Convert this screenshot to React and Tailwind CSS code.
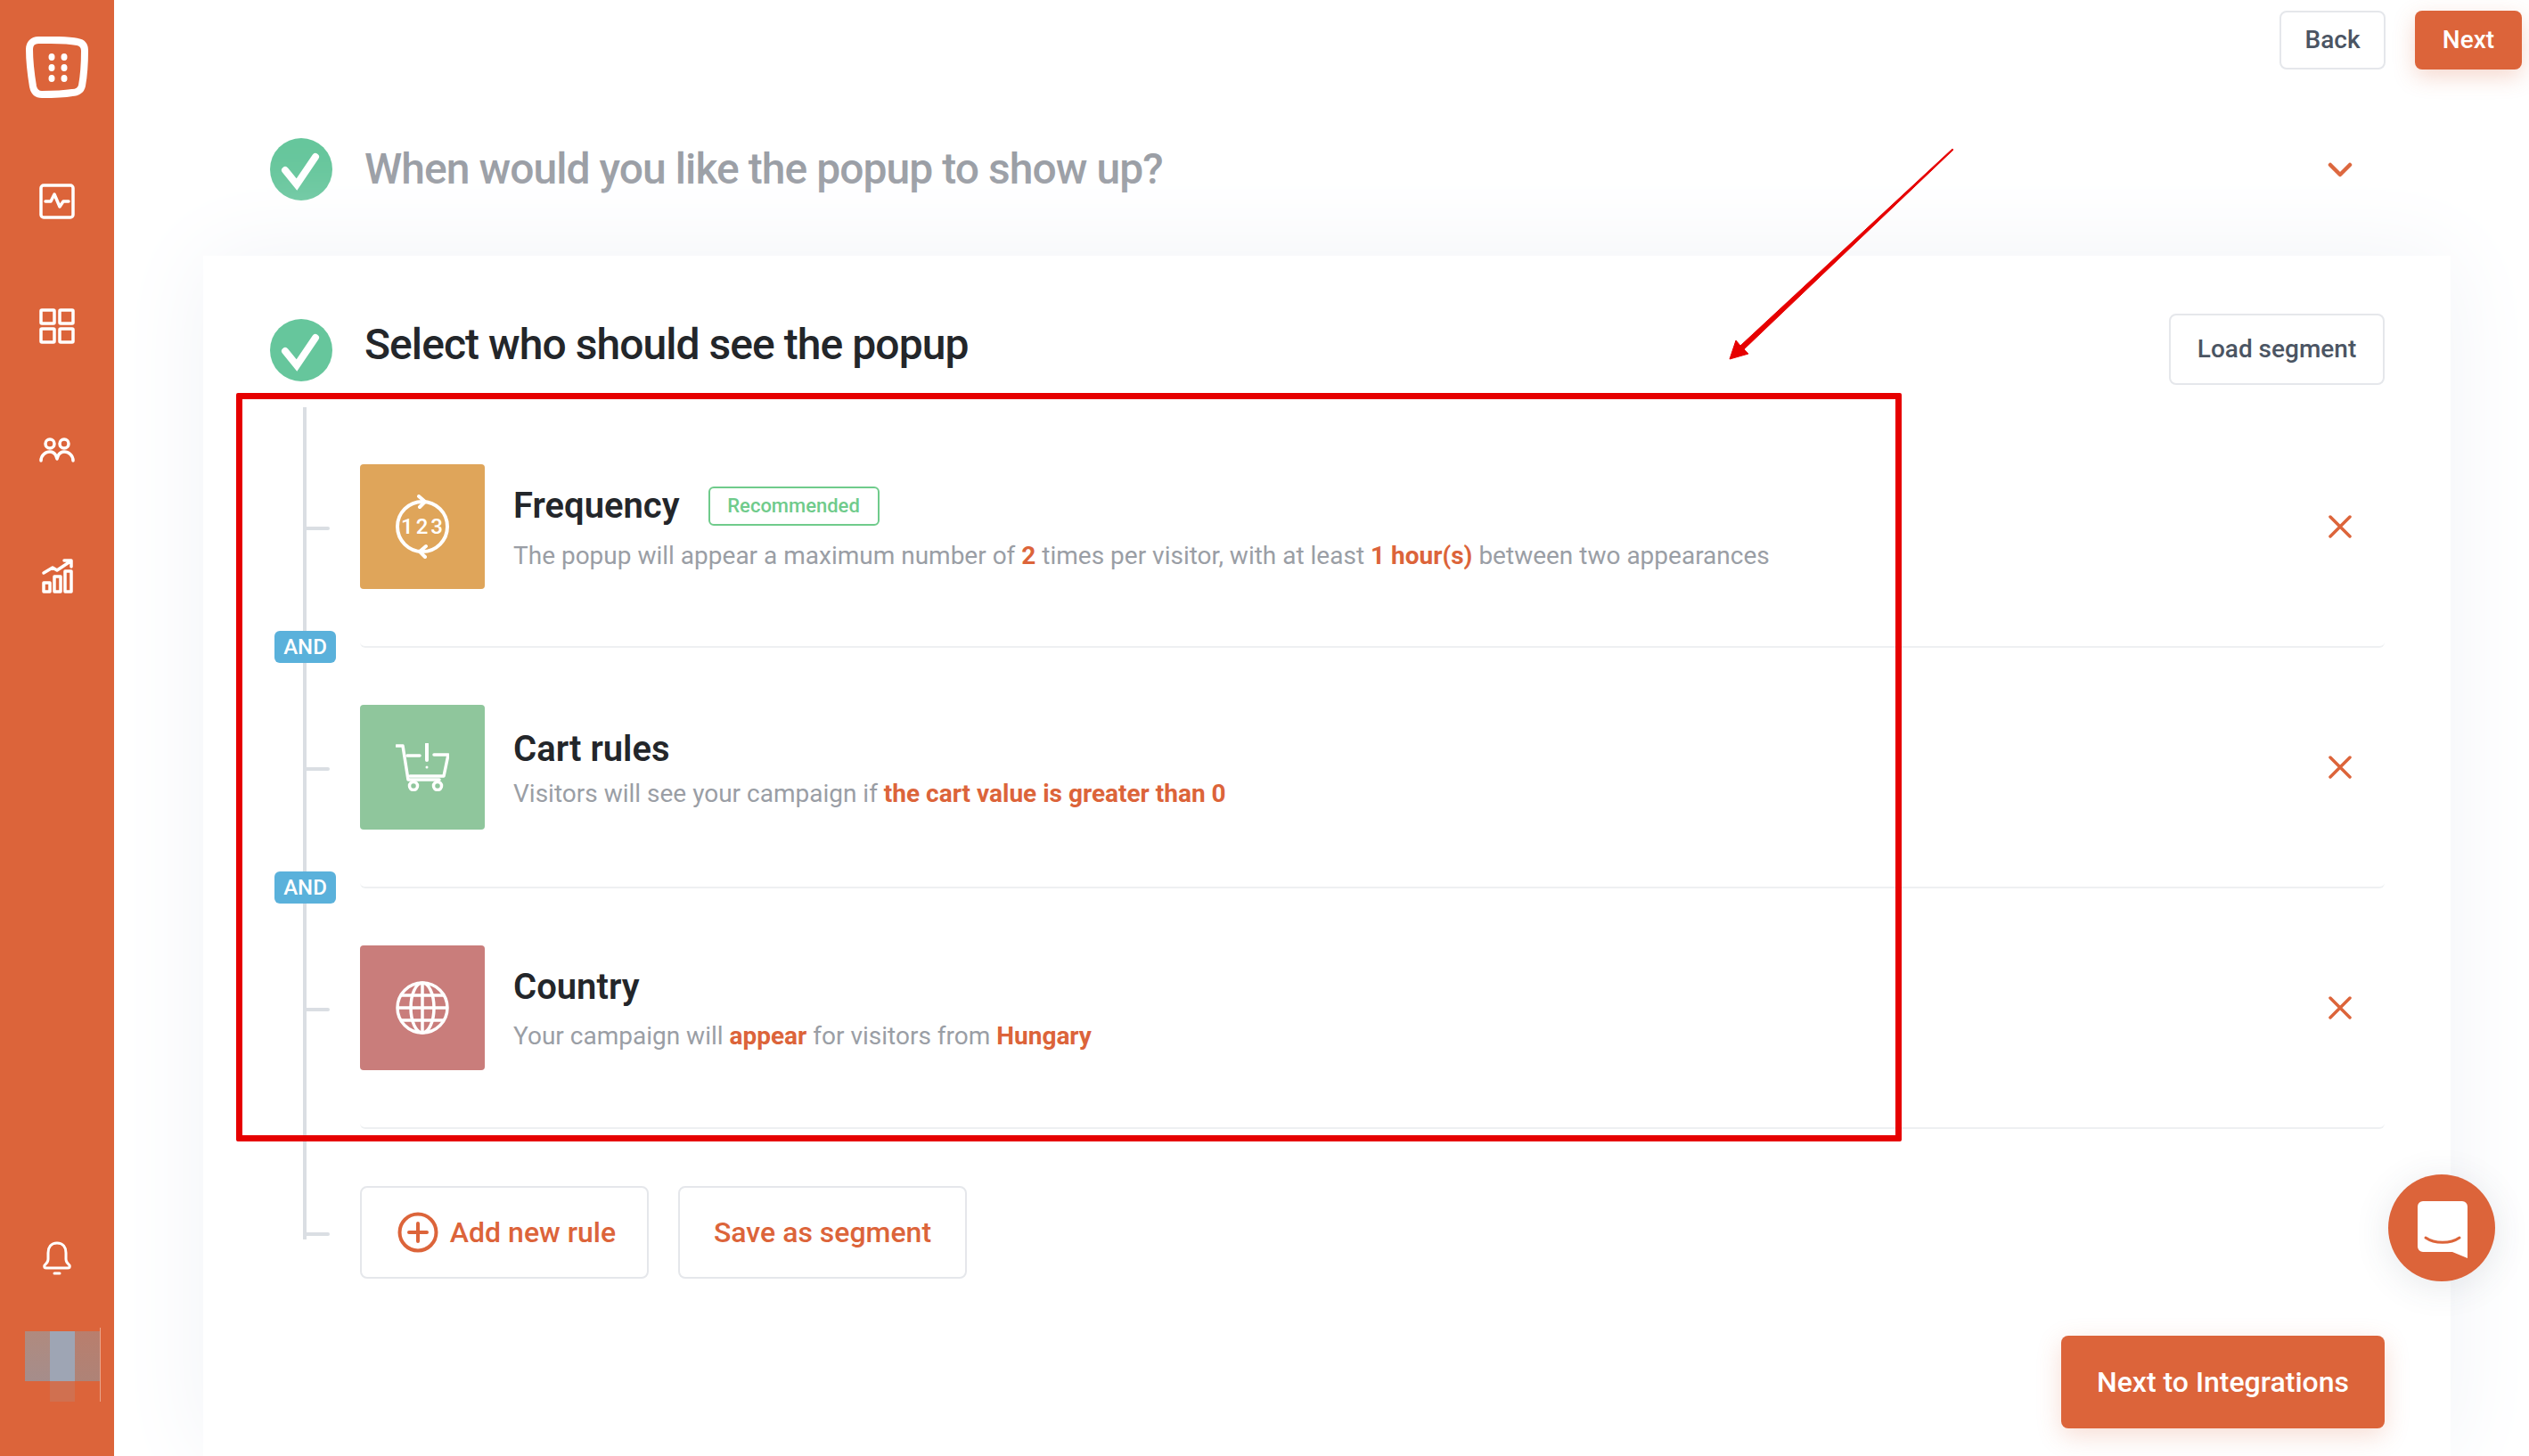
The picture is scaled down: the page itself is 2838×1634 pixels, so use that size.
import React from 'react'

const Check = () => (
    <div className="w-[70px] h-[70px] rounded-full bg-[#66c69c] shrink-0">
        <svg width="70" height="70" viewBox="0 0 70 70" fill="none">
            <path d="M17 36l13 16 21-31" stroke="#fff" strokeWidth="8" strokeLinecap="round" strokeLinejoin="miter" />
        </svg>
    </div>
)

const Close = () => (
    <svg width="26" height="26" viewBox="0 0 26 26" fill="none" className="mr-[37px] shrink-0">
        <path d="M2 2l22 22M24 2L2 24" stroke="#dc643a" strokeWidth="3.5" strokeLinecap="round" />
    </svg>
)

const FrequencyIcon = () => (
    <svg width="60" height="72" viewBox="0 0 60 72" fill="none" stroke="#fff" strokeWidth="4" strokeLinecap="round" strokeLinejoin="round">
        <circle cx="30" cy="36" r="28" />
        <path d="M26 2l7 6-6 6M34 58l-7 6 6 6" />
        <text x="31" y="44" textAnchor="middle" fill="#fff" stroke="none" fontSize="24" fontWeight="500" letterSpacing="3" fontFamily="Roboto, sans-serif">123</text>
    </svg>
)

const CartIcon = () => (
    <svg width="60" height="54" viewBox="0 0 60 54" fill="none" stroke="#fff" strokeWidth="3.5" strokeLinecap="round" strokeLinejoin="round">
        <path d="M1 3h7l6 38h35" />
        <path d="M13 14h14M43 13h16l-5 24H16" />
        <path d="M35 1v18" strokeWidth="4" />
        <circle cx="35" cy="27" r="1.5" fill="#fff" stroke="none" />
        <circle cx="20" cy="48" r="4.5" />
        <circle cx="47" cy="48" r="4.5" />
    </svg>
)

const GlobeIcon = () => (
    <svg width="60" height="60" viewBox="0 0 60 60" fill="none" stroke="#fff" strokeWidth="3.5">
        <circle cx="30" cy="30" r="28" />
        <ellipse cx="30" cy="30" rx="13" ry="28" />
        <path d="M30 2v56M2 30h56M6 16h48M6 44h48" />
    </svg>
)

const rules = [
    {
        color: 'bg-[#dfa55a]',
        icon: <FrequencyIcon />,
        title: 'Frequency',
        gap: 'mt-[12px]',
        desc: (
            <>
                The popup will appear a maximum number of <b className="font-bold text-[#dc643a]">2</b> times per visitor, with at least <b className="font-bold text-[#dc643a]">1 hour(s)</b> between two appearances
            </>
        ),
        badge: true,
    },
    {
        color: 'bg-[#8fc69c]',
        icon: <CartIcon />,
        title: 'Cart rules',
        gap: 'mt-[6px]',
        desc: (
            <>
                Visitors will see your campaign if <b className="font-bold text-[#dc643a]">the cart value is greater than 0</b>
            </>
        ),
    },
    {
        color: 'bg-[#c97d7b]',
        icon: <GlobeIcon />,
        title: 'Country',
        gap: 'mt-[11px]',
        desc: (
            <>
                Your campaign will <b className="font-bold text-[#dc643a]">appear</b> for visitors from <b className="font-bold text-[#dc643a]">Hungary</b>
            </>
        ),
    },
]

const RuleRow = ({ rule, last }) => (
    <div className="relative flex items-center h-[270px] border-b-2 border-[#eef0f2] rounded-b-md">
        <div className="absolute left-[-64px] top-[134px] w-[30px] h-[4px] bg-[#dadee3] rounded-sm"></div>
        {!last && (
            <div className="absolute left-[-96px] top-[251px] w-[69px] h-[36px] bg-[#5ab1db] rounded-md flex items-center justify-center text-white text-[24px] font-medium">
                AND
            </div>
        )}
        <div className={`${rule.color} w-[140px] h-[140px] rounded-[4px] flex items-center justify-center shrink-0`}>
            {rule.icon}
        </div>
        <div className="ml-[32px] flex-1 pt-[5px]">
            <div className="flex items-center">
                <h3 className="text-[40px] leading-[48px] font-semibold text-[#23262a]">{rule.title}</h3>
                {rule.badge && (
                    <span className="ml-[32px] h-[44px] w-[192px] flex items-center justify-center border-2 border-[#6fcb8b] rounded-md text-[22px] font-medium text-[#6fcb8b]">
                        Recommended
                    </span>
                )}
            </div>
            <p className={`${rule.gap} text-[28px] leading-[40px] text-[#9a9ea5]`}>{rule.desc}</p>
        </div>
        <Close />
    </div>
)

const SideIcon = ({ children, className }) => (
    <svg width="40" height="40" viewBox="0 0 40 40" fill="none" stroke="#fff" strokeWidth="3.5" strokeLinecap="round" strokeLinejoin="round" className={className}>
        {children}
    </svg>
)

const Sidebar = () => (
    <div className="w-[128px] h-full bg-[#dc643a] flex flex-col items-center shrink-0 relative">
        <svg width="70" height="70" viewBox="0 0 70 70" fill="none" className="mt-[41px]">
            <path d="M14 4 C28 4 44 3 58 6 C64 7 66 11 66 16 C66 30 65 44 63 55 C62 60 58 63 52 63 C40 65 28 65 18 65 C12 65 9 61 8 56 C6 44 4 30 4 14 C4 8 8 4 14 4 Z" stroke="#fff" strokeWidth="8" />
            <ellipse cx="29" cy="23" rx="3.5" ry="4" fill="#fff" />
            <ellipse cx="43" cy="23" rx="3.5" ry="4" fill="#fff" />
            <ellipse cx="29" cy="35" rx="3.5" ry="4" fill="#fff" />
            <ellipse cx="43" cy="35" rx="3.5" ry="4" fill="#fff" />
            <ellipse cx="29" cy="47" rx="3.5" ry="4" fill="#fff" />
            <ellipse cx="43" cy="47" rx="3.5" ry="4" fill="#fff" />
        </svg>
        <SideIcon className="mt-[95px]">
            <rect x="2" y="2" width="36" height="36" rx="3" />
            <path d="M7 20h6l4-8 6 14 4-6h6" />
        </SideIcon>
        <SideIcon className="mt-[100px]">
            <rect x="2" y="2" width="15" height="15" rx="1" />
            <rect x="23" y="2" width="15" height="15" rx="1" />
            <rect x="2" y="23" width="15" height="15" rx="1" />
            <rect x="23" y="23" width="15" height="15" rx="1" />
        </SideIcon>
        <SideIcon className="mt-[100px]">
            <circle cx="12" cy="12" r="5" />
            <circle cx="28" cy="12" r="5" />
            <path d="M2 31c0-6 5-10 10-10 4 0 7 3 8 8 1-5 4-8 8-8 5 0 10 4 10 10" />
        </SideIcon>
        <SideIcon className="mt-[100px]">
            <rect x="5" y="28" width="7" height="10" />
            <rect x="17" y="21" width="7" height="17" />
            <rect x="29" y="15" width="7" height="23" />
            <path d="M5 17l10-6 5 3L35 4M28 3h8v7" />
        </SideIcon>

        <svg width="34" height="38" viewBox="0 0 34 38" fill="none" stroke="#fff" strokeWidth="3" strokeLinecap="round" strokeLinejoin="round" className="absolute left-[47px] top-[1393px]">
            <path d="M17 2c-7 0-10 5-10 11v7c0 3-1 4-4 7-1 2 0 3 2 3h24c2 0 3-1 2-3-3-3-4-4-4-7v-7c0-6-3-11-10-11zM14 36h6" />
        </svg>
        <div className="absolute left-[28px] top-[1494px] w-[84px]">
            <div className="grid grid-cols-3 h-[56px]">
                <div className="bg-gradient-to-b from-[#b08a7e] to-[#a58d8b]"></div>
                <div className="bg-[#9ea5b4]"></div>
                <div className="bg-gradient-to-b from-[#b97e6d] to-[#ae8377]"></div>
            </div>
            <div className="w-[28px] h-[23px] ml-[28px] bg-[#d07050]"></div>
        </div>
        <div className="absolute left-[112px] top-[1490px] w-px h-[83px] bg-[#e9a58c]"></div>
    </div>
)

const App = () => {
    return (
        <div className="relative w-[2838px] h-[1634px] overflow-hidden flex bg-white font-['Roboto',sans-serif]">
            <Sidebar />

            <div className="flex-1 flex flex-col min-w-0">
                {/* top bar */}
                <div className="flex justify-end gap-[33px] pt-[12px] pr-[8px]">
                    <button className="w-[119px] h-[66px] border-2 border-[#e5e7eb] rounded-lg text-[28px] font-medium text-[#4b5563]">Back</button>
                    <button className="w-[120px] h-[66px] bg-[#dc643a] rounded-lg text-[28px] font-medium text-white shadow-[0_8px_24px_rgba(220,100,58,0.25)]">Next</button>
                </div>

                {/* collapsed step */}
                <div className="flex items-center h-[70px] mt-[77px] ml-[175px] mr-[198px]">
                    <Check />
                    <h2 className="ml-[36px] flex-1 text-[48px] leading-[56px] font-medium tracking-[-0.95px] text-[#9a9ea5]">When would you like the popup to show up?</h2>
                    <svg width="28" height="18" viewBox="0 0 28 18" fill="none" className="mt-[2px]">
                        <path d="M3 3l11 11L25 3" stroke="#dc643a" strokeWidth="4.5" strokeLinecap="round" strokeLinejoin="round" />
                    </svg>
                </div>

                {/* active step card */}
                <div className="flex-1 mt-[62px] ml-[100px] mr-[88px] bg-white shadow-[0_0_100px_#f1f3f7] pl-[176px] pr-[74px]">
                    <div className="relative flex items-center h-[80px] mt-[65px] ml-[-101px]">
                        <div className="mt-[1px]"><Check /></div>
                        <h2 className="ml-[36px] flex-1 text-[48px] leading-[56px] font-medium tracking-[-0.95px] text-[#23262a] mt-[-10px]">Select who should see the popup</h2>
                        <button className="w-[242px] h-[80px] border-2 border-[#e5e7eb] rounded-lg text-[28px] font-medium text-[#4b5563]">Load segment</button>
                    </div>

                    <div className="relative mt-[25px]">
                        <div className="absolute left-[-64px] top-0 w-[4px] h-[934px] bg-[#dadee3]"></div>
                        {rules.map((rule, i) => (
                            <RuleRow key={rule.title} rule={rule} last={i === rules.length - 1} />
                        ))}
                        <div className="relative flex gap-[33px] mt-[64px]">
                            <div className="absolute left-[-64px] top-[52px] w-[30px] h-[4px] bg-[#dadee3] rounded-sm"></div>
                            <button className="w-[324px] h-[104px] border-2 border-[#e5e7eb] rounded-lg flex items-center justify-center pl-[5px] text-[32px] font-medium text-[#dc643a]">
                                <svg width="46" height="46" viewBox="0 0 46 46" fill="none" stroke="#dc643a" strokeWidth="4" strokeLinecap="round" className="mr-[13px]">
                                    <circle cx="23" cy="23" r="20.5" />
                                    <path d="M23 13v20M13 23h20" />
                                </svg>
                                Add new rule
                            </button>
                            <button className="w-[324px] h-[104px] border-2 border-[#e5e7eb] rounded-lg text-[32px] font-medium text-[#dc643a]">Save as segment</button>
                        </div>
                        <div className="flex justify-end mt-[64px]">
                            <button className="w-[363px] h-[104px] bg-[#dc643a] rounded-lg text-[32px] font-medium text-white shadow-[0_8px_28px_rgba(220,100,58,0.22)]">Next to Integrations</button>
                        </div>
                    </div>
                </div>
            </div>

            {/* annotation drawn over the page */}
            <div className="absolute left-[265px] top-[441px] w-[1869px] h-[840px] border-[7px] border-[#e60000] rounded-[2px]"></div>
            <svg width="270" height="250" viewBox="1930 160 270 250" className="absolute left-[1930px] top-[160px]">
                <path d="M2191 167L2192 168L1957 392L1962 397L1941 403L1948 382L1953 388Z" fill="#e60000" stroke="#e60000" strokeWidth="1" strokeLinejoin="round" />
            </svg>

            {/* chat launcher */}
            <div className="absolute left-[2680px] top-[1318px] w-[120px] h-[120px] rounded-full bg-[#dc643a] flex items-center justify-center shadow-[0_6px_40px_rgba(60,70,90,0.12)]">
                <svg width="56" height="64" viewBox="0 0 56 64" className="ml-[2px] mt-[4px]">
                    <path d="M6 0h44a6 6 0 0 1 6 6v58l-17-7H6a6 6 0 0 1-6-6V6a6 6 0 0 1 6-6z" fill="#fff" />
                    <path d="M9 41c10 7 28 7 38 0" stroke="#dc643a" strokeWidth="3" strokeLinecap="round" fill="none" />
                </svg>
            </div>
        </div>
    )
}

export default App
